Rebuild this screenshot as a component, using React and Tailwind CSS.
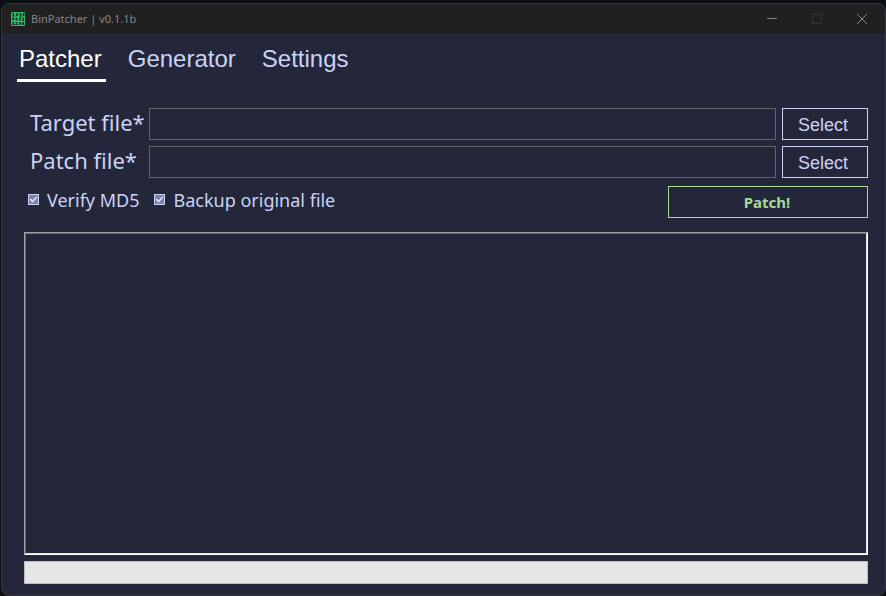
import { useState } from "react";

const FILES = [
  { id: "target", label: "Target file*" },
  { id: "patch", label: "Patch file*" },
];

const OPTIONS = [
  { id: "verify", label: "Verify MD5" },
  { id: "backup", label: "Backup original file" },
];

const TABS = ["Patcher", "Generator", "Settings"];

function AppIcon() {
  return (
    <svg width="14" height="14" viewBox="0 0 14 14" aria-hidden="true">
      <rect width="14" height="14" rx="1" fill="#2fb866" />
      <g fill="none" stroke="#12301f" strokeWidth="1">
        <path d="M1 1.5h1.5v2.5M1 4h3M5.5 1.5h1v2h-1zM8 1.5h1.5v2.5M8 4h3M12 1.5h1v2h-1z" />
        <path d="M1.5 6h1v2h-1zM5 6h1v2h-1zM8.5 6h1v2h-1zM11 6h1.5v2.5M11 8.5h2" />
        <path d="M1 10.5h1.5v2M1 12.5h3M4.5 10.5h1.5v2M4.5 12.5h2.5M8.5 10.5h1v2h-1zM11.5 10.5h1v2h-1z" />
      </g>
    </svg>
  );
}

function TitleBar() {
  return (
    <header className="flex h-[30px] items-center bg-[#202020] pr-px pl-[9px]">
      <AppIcon />
      <h1 className="ml-[6px] flex-1 font-['Noto_Sans',sans-serif] text-[11px] leading-4 text-[#858585]">
        BinPatcher | v0.1.1b
      </h1>
      <div className="flex text-[#858585]">
        <button aria-label="Minimize" className="flex h-[30px] w-[45px] items-center justify-center">
          <svg width="10" height="10" viewBox="0 0 10 10" stroke="currentColor">
            <path d="M0 4.5h10" />
          </svg>
        </button>
        <button aria-label="Maximize" disabled className="flex h-[30px] w-[45px] items-center justify-center text-[#363636]">
          <svg width="10" height="10" viewBox="0 0 10 10" fill="none" stroke="currentColor">
            <rect x="0.5" y="0.5" width="9" height="9" rx="0.5" />
          </svg>
        </button>
        <button aria-label="Close" className="flex h-[30px] w-[45px] items-center justify-center">
          <svg width="10" height="10" viewBox="0 0 10 10" stroke="currentColor">
            <path d="M0 0l10 10M10 0L0 10" />
          </svg>
        </button>
      </div>
    </header>
  );
}

function Tabs({ active, onSelect }) {
  return (
    <nav className="flex gap-5 pt-[9px] pl-[15px]">
      {TABS.map((tab) => (
        <button
          key={tab}
          onClick={() => onSelect(tab)}
          className={
            "h-[39px] border-b-[3px] pr-1 pb-1 pl-[2px] text-2xl leading-7 " +
            (tab === active ? "border-white text-white" : "border-transparent")
          }
        >
          {tab}
        </button>
      ))}
    </nav>
  );
}

function FileRow({ id, label }) {
  return (
    <div className="flex items-center gap-[6px]">
      <div className="flex flex-1 items-center">
        <label htmlFor={id} className="w-[125px] pb-1 pl-[6px] font-['Noto_Sans',sans-serif] text-[22px] leading-7 whitespace-nowrap">
          {label}
        </label>
        <input id={id} type="text" className="h-8 min-w-0 flex-1 border border-[#646464] bg-transparent px-2" />
      </div>
      <button className="h-8 w-[86px] border border-[#cad3f5] pt-[2px] pr-1 text-lg leading-7">Select</button>
    </div>
  );
}

function Option({ id, label }) {
  return (
    <div className="flex items-center gap-2">
      <span className="grid">
        <input
          id={id}
          type="checkbox"
          defaultChecked
          className="peer col-start-1 row-start-1 size-[11px] appearance-none border border-[#cad3f5] checked:bg-[#7c83aa]"
        />
        <svg
          viewBox="0 0 11 11"
          className="pointer-events-none col-start-1 row-start-1 size-[11px] opacity-0 peer-checked:opacity-100"
          fill="none"
          stroke="#dbe2ff"
          strokeWidth="1.6"
        >
          <path d="M2.3 5l2.2 2.6L8.7 3" />
        </svg>
      </span>
      <label htmlFor={id} className="font-['Noto_Sans',sans-serif] text-lg leading-6">
        {label}
      </label>
    </div>
  );
}

export default function App() {
  const [active, setActive] = useState("Patcher");
  return (
    <div className="flex min-h-screen flex-col bg-[#0b0f14] pt-[3px] pl-px font-['Liberation_Sans',Arial,sans-serif] text-[#cad3f5]">
      <div className="flex flex-1 flex-col overflow-hidden rounded-lg border border-[#363638] bg-[#24273a]">
        <TitleBar />
        <Tabs active={active} onSelect={setActive} />
        <main className="flex flex-1 flex-col pt-[26px] pr-[17px] pb-[11px] pl-[22px]">
          <div className="flex flex-col gap-[6px]">
            {FILES.map((file) => (
              <FileRow key={file.id} {...file} />
            ))}
          </div>
          <div className="mt-2 flex items-center justify-between">
            <div className="flex gap-[15px] pb-[5px] pl-1">
              {OPTIONS.map((option) => (
                <Option key={option.id} {...option} />
              ))}
            </div>
            <button className="h-8 w-[200px] border border-[#a6da95] pr-[2px] font-['Noto_Sans',sans-serif] text-[15px] leading-5 font-bold text-[#a6da95]">
              Patch!
            </button>
          </div>
          <div className="mt-[14px] flex flex-1 border border-t-[#a0a0a0] border-r-white border-b-white border-l-[#a0a0a0]">
            <textarea
              aria-label="Log"
              readOnly
              className="flex-1 resize-none border border-t-[#696969] border-r-[#e3e3e3] border-b-[#e3e3e3] border-l-[#696969] bg-transparent p-1 outline-none"
            />
          </div>
          <div
            role="progressbar"
            aria-label="Patch progress"
            aria-valuenow={0}
            className="mt-[6px] h-[23px] border border-[#bcbcbc] bg-[#e6e6e6]"
          />
        </main>
      </div>
    </div>
  );
}
